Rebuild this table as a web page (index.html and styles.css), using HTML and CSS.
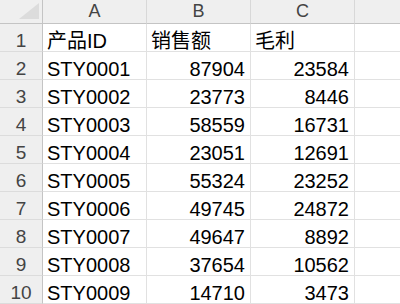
FILE: index.html
```html
<!DOCTYPE html>
<html lang="zh">
<head>
<meta charset="utf-8">
<link rel="stylesheet" href="styles.css">
</head>
<body>
<div class="sheet">
  <div class="corner"><svg class="tri" width="20" height="16" viewBox="0 0 20 16"><polygon points="20,0 20,16 0,16" fill="#dcdcdc"/></svg></div>
  <div class="colhead">A</div>
  <div class="colhead">B</div>
  <div class="colhead">C</div>
  <div class="colhead last"></div>

  <div class="rowhead">1</div><div class="cell">产品ID</div><div class="cell">销售额</div><div class="cell">毛利</div><div class="cell last"></div>
  <div class="rowhead">2</div><div class="cell">STY0001</div><div class="cell num">87904</div><div class="cell num">23584</div><div class="cell last"></div>
  <div class="rowhead">3</div><div class="cell">STY0002</div><div class="cell num">23773</div><div class="cell num">8446</div><div class="cell last"></div>
  <div class="rowhead">4</div><div class="cell">STY0003</div><div class="cell num">58559</div><div class="cell num">16731</div><div class="cell last"></div>
  <div class="rowhead">5</div><div class="cell">STY0004</div><div class="cell num">23051</div><div class="cell num">12691</div><div class="cell last"></div>
  <div class="rowhead">6</div><div class="cell">STY0005</div><div class="cell num">55324</div><div class="cell num">23252</div><div class="cell last"></div>
  <div class="rowhead">7</div><div class="cell">STY0006</div><div class="cell num">49745</div><div class="cell num">24872</div><div class="cell last"></div>
  <div class="rowhead">8</div><div class="cell">STY0007</div><div class="cell num">49647</div><div class="cell num">8892</div><div class="cell last"></div>
  <div class="rowhead">9</div><div class="cell">STY0008</div><div class="cell num">37654</div><div class="cell num">10562</div><div class="cell last"></div>
  <div class="rowhead">10</div><div class="cell">STY0009</div><div class="cell num">14710</div><div class="cell num">3473</div><div class="cell last"></div>
</div>
</body>
</html>
```

FILE: styles.css
```css
html, body {
  margin: 0;
  padding: 0;
  background: #ffffff;
  overflow: hidden;
}
.sheet {
  display: grid;
  grid-template-columns: 43px 104px 104px 104px 1fr;
  grid-template-rows: 24px repeat(10, 28px);
  font-family: "Liberation Sans", "Noto Sans CJK SC", sans-serif;
  font-size: 20px;
  color: #000;
  width: 400px;
}
.corner {
  box-sizing: border-box;
  background: #efefef;
  border-right: 1px solid #c4c4c4;
  border-bottom: 1px solid #c4c4c4;
  display: flex;
  justify-content: flex-end;
  align-items: flex-end;
  padding: 0 3px 4px 0;
}
.tri { display: block; }
.colhead {
  box-sizing: border-box;
  background: #efefef;
  border-right: 1px solid #d8d8d8;
  border-bottom: 1px solid #c4c4c4;
  color: #444;
  font-size: 18px;
  line-height: 20px;
  text-align: center;
  padding-top: 1px;
}
.rowhead {
  box-sizing: border-box;
  background: #efefef;
  border-right: 1px solid #c4c4c4;
  border-bottom: 1px solid #dcdcdc;
  color: #444;
  font-size: 19px;
  line-height: 20px;
  text-align: center;
  padding-top: 7px;
}
.cell {
  box-sizing: border-box;
  border-right: 1px solid #e1e1e1;
  border-bottom: 1px solid #e1e1e1;
  line-height: 20px;
  padding: 7px 5px 0 4px;
  white-space: nowrap;
}
.num { text-align: right; }
.last { border-right: none; }
```
